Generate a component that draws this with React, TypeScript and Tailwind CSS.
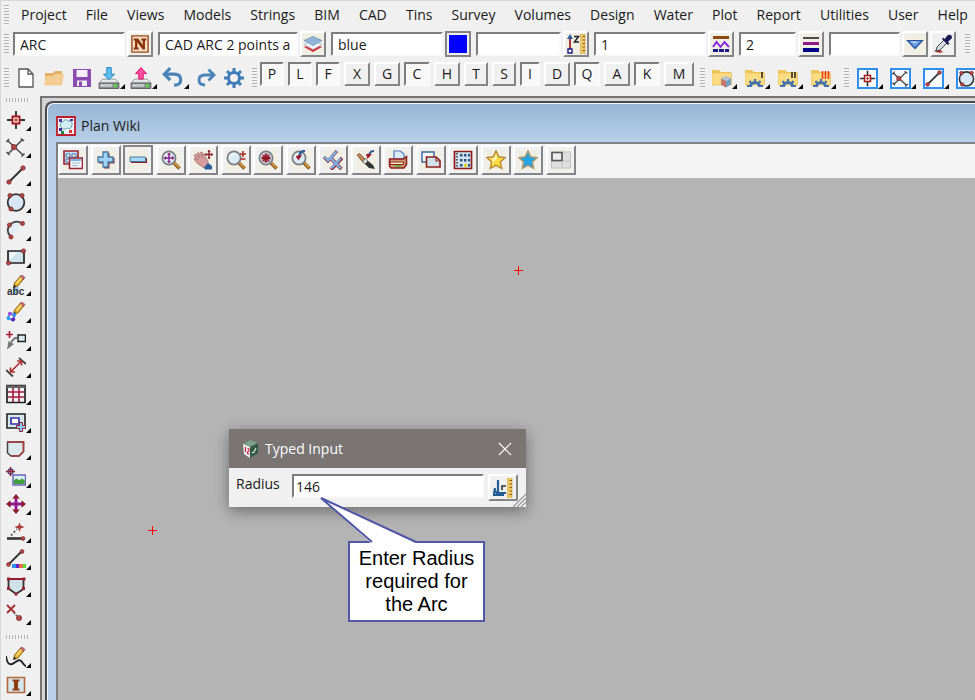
import type { ReactNode } from "react";

const button = "flex shrink-0 items-center justify-center border-2 bg-[#f0f0f0]";
const raised = `${button} border-t-white border-l-white border-r-[#858585] border-b-[#858585]`;
const framed = `${button} border-[#858585]`;
const sunken =
  "border-2 border-t-[#7d7d7d] border-l-[#7d7d7d] border-r-[#fafafa] border-b-[#fafafa]";

function Svg({ children, className = "size-5" }: { children: ReactNode; className?: string }) {
  return (
    <svg viewBox="0 0 20 20" fill="none" className={`shrink-0 ${className}`} aria-hidden="true">
      {children}
    </svg>
  );
}

function Dot({ x, y, r = 1.9 }: { x: number; y: number; r?: number }) {
  return <circle cx={x} cy={y} r={r} fill="#b04a4a" stroke="#7c1d1d" strokeWidth=".7" />;
}

function Corner() {
  return (
    <svg viewBox="0 0 5 5" className="mb-px size-[5px] shrink-0" aria-hidden="true">
      <path d="M5 0V5H0Z" fill="#000" />
    </svg>
  );
}

function Pencil() {
  return (
    <>
      <path d="M7.5 12.5 8.5 8 14.500 1 18 3.500 12 11Z" fill="#e8b02c" stroke="#8a5a10" strokeWidth=".9" />
      <path d="m14 1.800 1.600-2L19 2.500 17.500 4.500Z" fill="#c4676b" stroke="#8a3a3a" strokeWidth=".6" />
      <path d="m7.300 13 .9-3.500 2.300 2Z" fill="#333" />
      <path d="m10.500 8.500 5-6" stroke="#fbe08a" strokeWidth="1.200" />
    </>
  );
}

function Lens({ children }: { children?: ReactNode }) {
  return (
    <>
      <path d="m12.5 12.5 6 6" stroke="#8b5a1d" strokeWidth="3.4" />
      <path d="m13.2 12.6 4.8 4.8" stroke="#e2a84c" strokeWidth="1.4" />
      <circle cx="8" cy="8" r="6.6" fill="#dcecf5" stroke="#777e86" strokeWidth="1.7" />
      <path d="M4 7.5a4.4 4.4 0 0 1 4-3.8" stroke="#fff" strokeWidth="1.2" />
      {children}
    </>
  );
}

function Folder({ children }: { children: ReactNode }) {
  return (
    <Svg>
      <path d="M0 2h7l2 2h10v13H0Z" fill="#efc65a" />
      <path d="M0 5h19.5v12H0Z" fill="#fbdc83" stroke="#e6bd55" strokeWidth=".7" />
      {children}
    </Svg>
  );
}

function HalfGear() {
  return (
    <g stroke="#4472ae">
      <path d="M5.500 19a4.500 4.500 0 0 1 9 0" strokeWidth="3" />
      <path d="M10 14v-3M6.500 15.500 4.500 13M13.500 15.500l2-2.500M5.500 18H2M14.500 18H18" strokeWidth="2.200" />
    </g>
  );
}

function Disk({ color, edge, up }: { color: string; edge: string; up?: boolean }) {
  return (
    <Svg className="size-[22px]">
      <path d="M4 11h12l3 4H1Z" fill="#e4e6e6" stroke="#85898a" strokeWidth=".7" />
      <path d="M1 14.5h18v5H1Z" fill="#8c9091" stroke="#4e5152" strokeWidth=".8" />
      <path d="M2 15.500h11v2.500H2Z" fill="#c8cccc" />
      <circle cx="15.8" cy="17" r="1.5" fill="#50e02c" />
      <path
        d={up ? "M10 .5 15 6h-3v5H8V6H5Z" : "M10 11.500 5 6.5h3V.5h4v6h3Z"}
        fill={color}
        stroke={edge}
        strokeWidth=".9"
      />
    </Svg>
  );
}

const star = "m10 .8 2.7 6 6.5.7-4.8 4.4 1.3 6.6L10 15.3l-5.7 3.2 1.3-6.6L.8 7.5l6.5-.7Z";

const point = (
  <>
    <path d="M10 1v18M1 10h18" stroke="#333" strokeWidth="1.9" />
    <path d="M6.500 6.500h7v7h-7Z" fill="#fff" stroke="#a61c1c" strokeWidth="1.9" />
    <path d="M10 8v4M8 10h4" stroke="#a61c1c" />
  </>
);
const intersect = (
  <>
    <path d="M1.5 3.5 17 18M2 17 16.5 2.5M.5 5l2.5-3M15 1.5 18 4M.5 15 3.5 18M15.5 19.5l3-3" stroke="#444" strokeWidth="1.5" />
    <Dot x={8} y={10} r={2.6} />
  </>
);
const line = (
  <>
    <path d="M3 17 17 3" stroke="#333" strokeWidth="2" />
    <Dot x={3} y={17} r={2.2} />
    <Dot x={17} y={3} r={2.2} />
  </>
);
const circle = (
  <>
    <circle cx="10" cy="10.5" r="8.3" fill="#d7e7f6" stroke="#333" strokeWidth="1.8" />
    <Dot x={4} y={3.5} r={2.1} />
    <Dot x={16} y={3.5} r={2.1} />
    <Dot x={5} y={17} r={2.1} />
  </>
);

const leftTools: [string, ReactNode][] = [
  ["Point", <Svg>{point}</Svg>],
  ["Intersect", <Svg>{intersect}</Svg>],
  ["Line", <Svg>{line}</Svg>],
  ["Circle", <Svg>{circle}</Svg>],
  [
    "Arc",
    <Svg>
      <path d="M16 3Q7 0 3 6T5 17Z" fill="#e2edf8" />
      <path d="M16.5 3.5Q9-1 4 5T5 17" stroke="#444" strokeWidth="1.8" />
      <Dot x={16.5} y={3.5} r={2.1} />
      <Dot x={3.5} y={5} r={2.1} />
      <Dot x={5} y={17} r={2.1} />
    </Svg>,
  ],
  [
    "Rectangle",
    <Svg>
      <path d="M2 4h16v12H2Z" fill="#cfe3ea" stroke="#222" strokeWidth="1.7" />
      <path d="M3 5h9L4 13Z" fill="#eef7fa" />
      <Dot x={2.5} y={16} r={2.1} />
      <Dot x={17.5} y={4} r={2.1} />
    </Svg>,
  ],
  [
    "Text",
    <Svg>
      <path d="M7 12h6v7H7Z" fill="#9fcdf0" />
      <Pencil />
      <text x="1" y="19.500" fontSize="10" fontWeight="bold" fontFamily="Liberation Sans, sans-serif" fill="#333">abc</text>
    </Svg>,
  ],
  [
    "Paint",
    <Svg>
      <Pencil />
      <circle cx="4" cy="12" r="2.2" fill="#9a50d8" />
      <circle cx="8" cy="13" r="2.2" fill="#3f8cf0" />
      <circle cx="2.8" cy="16" r="2.2" fill="#2fa0ea" />
      <circle cx="7" cy="17.3" r="2.2" fill="#5b24b8" />
      <circle cx="5.2" cy="14.7" r="1.5" fill="#fff" />
    </Svg>,
  ],
  [
    "Leader",
    <Svg>
      <path d="M3.5 1v7M0 4.5h7" stroke="#a61c3a" strokeWidth="1.7" />
      <path d="M12 5h7.500v6.500H12Z" fill="#d6e8f0" stroke="#222" strokeWidth="1.5" />
      <path d="M11.500 8H9L5 12" stroke="#777" strokeWidth="1.8" />
      <path d="M1 19.500 2.500 11 8 14Z" fill="#777" />
    </Svg>,
  ],
  [
    "Dimension",
    <Svg>
      <path d="m0 13 7 6.500M13 1l7 6" stroke="#444" strokeWidth="1.8" />
      <path d="M5 14.500 15 4.500M4.500 10.500V15H9M11 4h4.500v4.500" stroke="#b03030" strokeWidth="1.7" />
    </Svg>,
  ],
  [
    "Table",
    <Svg>
      <path d="M1 1.500h18v17H1Z" fill="#eef3f5" stroke="#222" strokeWidth="1.7" />
      <path d="M1 1.500h18V4H1Z" fill="#666" />
      <path d="M7 4v14M13 4v14M2 8h16M2 13h16" stroke="#a61c3a" strokeWidth="1.6" />
    </Svg>,
  ],
  [
    "Viewport",
    <Svg>
      <path d="M1 2h18v14H1Z" fill="#d6e8ef" stroke="#222" strokeWidth="1.6" />
      <path d="M5 6h8v6H5Z" fill="#fff" stroke="#3a32a8" strokeWidth="1.7" />
      <path d="M13.500 10.500h3v3h3v3h-3v3h-3v-3h-3v-3h3Z" fill="#8cc8f4" stroke="#8e2032" />
    </Svg>,
  ],
  [
    "Polygon",
    <Svg>
      <path d="M1.500 3h16v9.500L13 17H5l-3.500-3Z" fill="#dbe9ec" stroke="#444" strokeWidth="1.5" />
      <path d="M1 3h16.500v9.500L13 17H5" stroke="#a83a3a" strokeWidth="1.5" />
    </Svg>,
  ],
  [
    "Image",
    <Svg>
      <path d="M4.500 0v9M0 4.500h9" stroke="#a61c1c" strokeWidth="1.5" />
      <circle cx="4.500" cy="4.500" r="2.500" stroke="#553a78" strokeWidth="1.3" />
      <path d="M7 8h12.500v10H7Z" fill="#d9f0fb" stroke="#6a66b5" strokeWidth="1.5" />
      <path d="M8 17v-4l3-1.500 2 2 3-2 2.800 2V17Z" fill="#3f9c3a" />
    </Svg>,
  ],
  [
    "Move",
    <Svg>
      <path d="M10 3v14M3 10h14" stroke="#8b1a8f" strokeWidth="2.8" />
      <path d="m10 0 3.800 4.500H6.200ZM10 20l3.800-4.500H6.200ZM0 10l4.500-3.800v7.600ZM20 10l-4.500-3.800v7.600Z" fill="#8f1a28" />
    </Svg>,
  ],
  [
    "Angle",
    <Svg>
      <path d="M1 16.500h15" stroke="#333" strokeWidth="2.600" />
      <path d="M5 13.500 11 7" stroke="#444" strokeWidth="1.600" strokeDasharray="2 2" />
      <path d="m13.500.5 1.200 3 3.800 1.500-3.800 1.500-1.200 3.500-1.200-3.500L8.500 5l3.800-1.500Z" fill="#a83a3a" />
      <Dot x={17} y={16.500} />
    </Svg>,
  ],
  [
    "Colour line",
    <Svg>
      <path d="M2.500 15.500 15.500 2.500" stroke="#333" strokeWidth="1.800" />
      <Dot x={2.500} y={15.500} />
      <Dot x={16} y={2.500} />
      <path d="M6 15h4v4H6Z" fill="#2a8cf0" />
      <path d="M10 15h3v4h-3Z" fill="#6a1ec0" />
      <path d="M13 15h4v4h-4Z" fill="#f0684a" />
      <path d="M17 15h3v4h-3Z" fill="#4ee02c" />
    </Svg>,
  ],
  [
    "Shield",
    <Svg>
      <path d="M2.500 3h15v10L10 18l-7.500-5.500Z" fill="#cfe2e8" stroke="#333" strokeWidth="1.800" />
      <path d="M2 3h16" stroke="#8f1a28" strokeWidth="2" />
      <path d="M1 1.500h3v3H1ZM16.500 1.500h3v3h-3ZM1 11h3v3H1ZM16 11h3v3h-3ZM8.500 16.500h3v3h-3Z" fill="#a02030" />
    </Svg>,
  ],
  [
    "Delete",
    <Svg>
      <path d="m1 1 8 8M9 1 1 9" stroke="#a63232" strokeWidth="1.900" />
      <path d="m8 9 4 4" stroke="#555" strokeWidth="1.300" strokeDasharray="1.500 1" />
      <Dot x={13} y={14} r={2.600} />
    </Svg>,
  ],
];

const bottomTools: [string, ReactNode][] = [
  [
    "Sketch",
    <Svg>
      <path d="M0 9c1 8 4 10 8 7s6-4 8-1 3 4 4 4" stroke="#222" strokeWidth="1.900" />
      <Pencil />
    </Svg>,
  ],
  [
    "Insert",
    <Svg>
      <path d="M1.500 2.500h17v15h-17Z" fill="#d3e6ec" stroke="#b5653a" strokeWidth="1.600" />
      <path d="M6.500 4.500h7v2H12v7h1.500v2h-7v-2H8v-7H6.500Z" fill="#8e3a12" />
    </Svg>,
  ],
];

const viewTools: [string, ReactNode][] = [
  [
    "Windows",
    <Svg>
      <path d="M1 1h14v13H1Z" fill="#c6def2" stroke="#9c2432" strokeWidth="1.600" />
      <path d="M3 4h4v3H3ZM9 4h4v3H9ZM3 9h4v3H3Z" fill="#fff" stroke="#4270a8" />
      <path d="M6.500 8h13v10.500h-13Z" fill="#eef6fb" stroke="#9c2432" strokeWidth="1.600" />
      <path d="M7.500 10h11" stroke="#7ab0dc" strokeWidth="2" />
      <path d="M9 13h8M9 15.500h6" stroke="#9db8ca" />
    </Svg>,
  ],
  ["Add", <Svg><path d="M8 3h5.500v5h5v5.500h-5v5H8v-5H3V8h5Z" fill="#8c3038" /><path d="M7 2h5v5h5v5h-5v5H7v-5H2V7h5Z" fill="#9dd3f4" stroke="#4778a0" strokeWidth="1.300" /></Svg>],
  ["Remove", <Svg><path d="M3 8h16v5H3Z" fill="#8e1e2c" /><path d="M2 7h15.500v4.500H2Z" fill="#a5dbf8" stroke="#4778a0" /></Svg>],
  [
    "Fit",
    <Svg>
      <Lens>
        <path d="M8 4v8M4 8h8" stroke="#8a1f9a" strokeWidth="1.500" />
        <path d="m8 2.500 2 2.500H6ZM8 13.500 10 11H6ZM2.500 8 5 6v4ZM13.500 8 11 6v4Z" fill="#8a1f6a" />
      </Lens>
    </Svg>,
  ],
  [
    "Pan",
    <Svg>
      <path d="M1 5.500 2.500 4 7 7.500 4 3.500 5.500 2.500 10 7 7.500 2.500 9 2l6 9v4l-4 3-7-5-3-4 1-1.500 3 2.500Z" fill="#d69c9c" stroke="#9a6464" strokeWidth=".7" />
      <path d="m11 17.500 4-4.500 4 3v3.500h-7Z" fill="#2c5c9a" />
      <path d="M16 0v9M11.500 4.500h8.500" stroke="#8e1e2c" strokeWidth="1.400" />
      <path d="m16 0 1.500 2h-3ZM16 9l1.500-2h-3ZM20 4.500 18 3v3ZM11.500 4.500l2-1.500v3Z" fill="#8e1e2c" />
    </Svg>,
  ],
  ["Zoom", <Svg><Lens /><path d="M17 1v6M14 4h6M14.500 9h5" stroke="#a62a2a" strokeWidth="1.500" /></Svg>],
  [
    "Shrink",
    <Svg>
      <Lens>
        <path d="m4.500 4.500 7 7M11.500 4.500l-7 7" stroke="#a01828" strokeWidth="1.200" />
        <path d="M7.200 3.500v3.700H3.500M8.800 3.500v3.700h3.700M7.200 12.500V8.800H3.500M8.800 12.500V8.800h3.700" stroke="#8e1424" strokeWidth="1.400" />
      </Lens>
    </Svg>,
  ],
  [
    "Previous zoom",
    <Svg>
      <Lens>
        <path d="M14 .5Q9 1 8 7" stroke="#2e5c94" strokeWidth="2.400" />
        <path d="M4.500 6 11 5 7.500 10.500Z" fill="#a01828" />
      </Lens>
    </Svg>,
  ],
  [
    "Toggle",
    <Svg>
      <path d="m1 7 4 4L14 1" stroke="#8e2432" strokeWidth="3.200" />
      <path d="m7.500 8 11 11M19 8 8 19.500" stroke="#8e2432" strokeWidth="3.600" />
      <path d="m1 6.500 4 4L14 1M8 8.500l10 10M18 8.500l-10 10" stroke="#7db2e4" strokeWidth="2.400" />
    </Svg>,
  ],
  [
    "Redraw",
    <Svg>
      <path d="m1 5 2.500-1.500 6 6-2.500 3Z" fill="#bc8558" stroke="#6c4424" strokeWidth=".7" />
      <path d="m6.500 11.500 3-3 2.500 2.500-3 3Z" fill="#d8d8d8" stroke="#555" strokeWidth=".7" />
      <path d="M9 14 12 11l5 4 2 4-6-1Z" fill="#333" />
      <path d="M18 1q-4 0-5 4" stroke="#2e5c94" strokeWidth="2" />
      <path d="M10 4h6l-4.500 5Z" fill="#a01828" />
    </Svg>,
  ],
  [
    "Print",
    <Svg>
      <path d="M6 9V1h6l4 3v5Z" fill="#dcebfa" stroke="#4a78c0" strokeWidth="1.200" />
      <path d="M1.500 9h14l3-2.500v8L16 18H3l-1.500-2Z" fill="#cf9a74" stroke="#8e1e1e" strokeWidth="1.500" />
      <path d="M2 12h13.500v2.500H2Z" fill="#fff1c8" stroke="#8e1e1e" />
      <path d="M7 16h6" stroke="#3cbf30" strokeWidth="1.400" />
    </Svg>,
  ],
  [
    "Copy view",
    <Svg>
      <path d="M1 2h12v10H1Z" fill="#f4f8fa" stroke="#3c6c9c" strokeWidth="1.500" />
      <path d="M5.500 7H15l4 3.500V17H5.500Z" fill="#cfe4e8" stroke="#8e1e1e" strokeWidth="1.600" />
      <path d="M15 7v4h4" stroke="#8e1e1e" strokeWidth="1.200" />
    </Svg>,
  ],
  [
    "Grid",
    <Svg>
      <path d="M1.500 1.500h17v17h-17Z" fill="#d2e4ee" stroke="#8e1e1e" strokeWidth="1.700" />
      <path d="M4 3v14" stroke="#333" strokeWidth="1.500" strokeDasharray="1.500 1.500" />
      <path d="M7 4h2.500v2.500H7ZM11 4h2.500v2.500H11ZM15 4h2v2.500h-2ZM7 9h2.500v2.500H7ZM11 9h2.500v2.500H11ZM15 9h2v2.500h-2ZM7 14h2.500v2.500H7ZM15 14h2v2.500h-2Z" fill="#2c5084" />
      <path d="M11 14h3v3h-3Z" fill="#e8d020" />
    </Svg>,
  ],
  ["Favourites", <Svg><path d={star} fill="#fbdc3c" stroke="#b78a3c" strokeWidth="1.400" /><path d="m10 4 1.300 4-5.300 6 1-4.500L4 8.500l4-.5Z" fill="#fff4b0" /></Svg>],
  ["User favourites", <Svg><path d={star} fill="#22a3e6" stroke="#b19a6c" strokeWidth="1.400" /></Svg>],
  [
    "Layout",
    <Svg>
      <path d="M.5 2h19v16H.5Z" fill="#dedede" stroke="#c2c2c2" />
      <path d="M11 2v16M1 11h18" stroke="#c2c2c2" />
      <path d="M1 2.500h10v8H1Z" fill="#ececec" stroke="#555" strokeWidth="1.600" />
    </Svg>,
  ],
];

const rulerIcon = (
  <>
    <path d="M14.500 0H19v20h-4.500Z" fill="#f0ca68" stroke="#cfa03c" strokeWidth=".6" />
    <path d="M16.500 2.500H19M16.500 6H19M16.500 9.500H19M16.500 13H19M16.500 16.500H19" stroke="#8a5a10" />
  </>
);

const fields: { label: string; value: string; width: string; icon: ReactNode }[] = [
  {
    label: "Name",
    value: "ARC",
    width: "w-[112px]",
    icon: (
      <Svg className="size-[18px]">
        <path d="M1 1h18v18H1Z" fill="#f5dcc4" stroke="#9a4a1c" strokeWidth="1.500" />
        <path d="M3 4h5l5 7V6h-1.500V4H17v2h-1.500v10H13L7 8v6h1.500v2H3v-2h1.500V6H3Z" fill="#8e3208" />
      </Svg>
    ),
  },
  {
    label: "Model",
    value: "CAD ARC 2 points and radius",
    width: "w-[140px]",
    icon: (
      <Svg>
        <path d="m1 13 9-4 9 4-9 5Z" fill="#d8303c" />
        <path d="m1 10.500 9-4 9 4-9 5Z" fill="#eef5fa" stroke="#9ab4c8" strokeWidth=".7" />
        <path d="m1 6.500 9-4 9 4-9 5Z" fill="#8fb4d6" stroke="#6a8eb0" strokeWidth=".7" />
      </Svg>
    ),
  },
  { label: "Colour", value: "blue", width: "w-[112px]", icon: <span className="size-[18px] shrink-0 bg-[#0000ff]" /> },
  {
    label: "Height",
    value: "",
    width: "w-[85px]",
    icon: (
      <Svg>
        {rulerIcon}
        <path d="M4 4v12" stroke="#a02828" strokeWidth="1.800" />
        <path d="m4 0 3 5H1Z" fill="#2a5c9c" />
        <path d="M2 15h4v4H2Z" fill="#fff" stroke="#1c1c8c" strokeWidth="1.400" />
        <path d="M8 2.500h4.500L8.500 8H13" stroke="#222" strokeWidth="1.500" />
      </Svg>
    ),
  },
  {
    label: "Style",
    value: "1",
    width: "w-[112px]",
    icon: (
      <Svg>
        <path d="M2 3.500h16" stroke="#8e4a10" strokeWidth="3" />
        <path d="m2 13 3.500-5 4 5 4-5L18 13" stroke="#8a2be2" strokeWidth="2" />
        <path d="M2 16.500h16" stroke="#1a1a8c" strokeWidth="2.800" strokeDasharray="5 1" />
      </Svg>
    ),
  },
  {
    label: "Weight",
    value: "2",
    width: "w-[57px]",
    icon: (
      <Svg>
        <path d="M2 4h16" stroke="#222" strokeWidth="1.600" />
        <path d="M2 9.500h16" stroke="#8e1a8e" strokeWidth="3" />
        <path d="M2 16h16" stroke="#00008b" strokeWidth="4" />
      </Svg>
    ),
  },
  {
    label: "Tinability",
    value: "",
    width: "w-[71px]",
    icon: (
      <Svg>
        <path d="M2.500 6.500h15L10 14.500Z" fill="#6c9ce4" stroke="#27539c" strokeWidth="1.200" />
        <path d="M5 7.500h8l-3 2Z" fill="#c3dcfa" />
      </Svg>
    ),
  },
];

const snaps: [string, string, boolean][] = [
  ["P", "w-6", true],
  ["L", "w-6", true],
  ["F", "w-6", true],
  ["X", "w-[26px]", false],
  ["G", "w-[26px]", false],
  ["C", "w-[26px]", true],
  ["H", "w-[26px]", false],
  ["T", "w-6", false],
  ["S", "w-6", false],
  ["I", "w-5", true],
  ["D", "w-[26px]", false],
  ["Q", "w-[26px]", true],
  ["A", "w-[26px]", false],
  ["K", "w-[26px]", true],
  ["M", "w-[30px]", false],
];

const fileTools: [string, ReactNode][] = [
  ["New", <Svg><path d="M3 1h9l5 5v13H3Z" fill="#fff" stroke="#555" strokeWidth="1.300" /><path d="M12 1v5h5" stroke="#555" strokeWidth="1.300" /></Svg>],
  ["Open", <Svg><path d="M1 17V5h8l2-2h7v14Z" fill="#e3b068" /><path d="M0 17.500 2 8h7l2-2h9l-2 11.500Z" fill="#f3cd93" /></Svg>],
  [
    "Save",
    <Svg>
      <path d="M1 1h18v18H1Z" fill="#8a4bb0" />
      <path d="M4.500 2h11v7h-11ZM5 12.500h10V18H5Z" fill="#f3eef7" />
      <path d="M7 13.500h3V18H7Z" fill="#8a4bb0" />
    </Svg>,
  ],
];

const transferTools: [string, ReactNode][] = [
  ["Import", <Disk color="#5fc0f0" edge="#1f86c4" />],
  ["Export", <Disk color="#ff4fa0" edge="#e0106c" up />],
  [
    "Undo",
    <Svg className="size-[22px]">
      <path d="M3 6.500h8q6 0 6 5T11 16.500" stroke="#4a83b8" strokeWidth="2.800" />
      <path d="M7.500 1 2 6.500 7.500 12" stroke="#4a83b8" strokeWidth="2.800" />
    </Svg>,
  ],
];

const historyTools: [string, ReactNode][] = [
  [
    "Redo",
    <Svg>
      <path d="M17 7H9q-6 0-6 5T9 17" stroke="#4a83b8" strokeWidth="2.800" />
      <path d="m12.500 1.500 5.500 5.500-5.500 5.500" stroke="#4a83b8" strokeWidth="2.800" />
    </Svg>,
  ],
  [
    "Settings",
    <Svg>
      <circle cx="10" cy="10" r="5.500" stroke="#3f7cb8" strokeWidth="3" />
      <path d="M10 0v4M10 16v4M0 10h4M16 10h4M3 3l2.700 2.700M14.300 14.300 17 17M17 3l-2.700 2.700M5.700 14.300 3 17" stroke="#3f7cb8" strokeWidth="3" />
    </Svg>,
  ],
];

const chainTools: [string, ReactNode][] = [
  [
    "Project folder",
    <Folder>
      <path d="m14 8 5 2.500v6L14 19.500l-5-3v-6Z" fill="#6fa0c0" />
      <path d="m9 10.500 5 2.500v6.500l-5-3Z" fill="#c8776a" />
      <path d="m14 8 5 2.500-5 2.500-5-2.500Z" fill="#b8c4cc" />
    </Folder>,
  ],
  ["Chain 1", <Folder><HalfGear /><path d="M17 4v6" stroke="#222" strokeWidth="1.500" /></Folder>],
  ["Chain 2", <Folder><HalfGear /><path d="M14 4v6M17 4v6" stroke="#222" strokeWidth="1.500" /></Folder>],
  ["Chain 3", <Folder><HalfGear /><path d="M11.500 3v8M14.500 3v8M17.500 3v8" stroke="#f03a1c" strokeWidth="1.600" /></Folder>],
];

const cadTools: [string, ReactNode][] = [
  ["CAD point", point],
  ["CAD intersect", intersect],
  ["CAD line", line],
  ["CAD circle", circle],
];

const menus = [
  "Project", "File", "Views", "Models", "Strings", "BIM", "CAD", "Tins", "Survey", "Volumes",
  "Design", "Water", "Plot", "Report", "Utilities", "User", "Help",
];

function Grip() {
  return (
    <span className="h-5 w-[5px] shrink-0 bg-[repeating-linear-gradient(to_bottom,#b0b0b0_0_1px,#f4f4f4_1px_3px)]" />
  );
}

function WideGrip() {
  return (
    <span className="ml-[5px] h-1 w-6 shrink-0 bg-[repeating-linear-gradient(to_right,#b0b0b0_0_1px,#f4f4f4_1px_3px)]" />
  );
}

function FlatTool({ name, icon }: { name: string; icon: ReactNode }) {
  return (
    <button type="button" aria-label={name} className="flex h-6 w-7 shrink-0 items-center justify-center">
      {icon}
    </button>
  );
}

function MenuTool({ name, icon }: { name: string; icon: ReactNode }) {
  return (
    <button type="button" aria-label={name} className="flex h-6 w-8 shrink-0 items-end pl-[2px]">
      <span className="flex h-6 items-center">{icon}</span>
      <Corner />
    </button>
  );
}

function SideTool({ name, icon }: { name: string; icon: ReactNode }) {
  return (
    <button type="button" aria-label={name} className="flex h-6 w-8 shrink-0 items-end pl-[5px]">
      <span className="flex h-6 items-center">{icon}</span>
      <Corner />
    </button>
  );
}

function Marker({ className }: { className: string }) {
  return (
    <svg viewBox="0 0 9 9" className={`absolute size-[9px] ${className}`} aria-hidden="true">
      <path d="M4 0h1v4h4v1H5v4H4V5H0V4h4Z" fill="#ff0000" />
    </svg>
  );
}

function TypedInput() {
  return (
    <div className="absolute left-[171px] top-[251px] w-[297px] bg-[#f0f0f0] shadow-[0_4px_14px_rgba(0,0,0,0.4)]">
      <div className="flex h-[39px] items-center bg-[#7a7473] pl-3 pr-[14px] text-white">
        <Svg>
          <path d="m9 1 8 3-8 4-7-3Z" fill="#7da08c" />
          <path d="m2 5 7 3v11l-6-4Z" fill="#f2eeee" />
          <path d="m9 8 8-4v10l-8 5Z" fill="#345a48" />
          <path d="m11 14 2-1 2-4" stroke="#dce8e0" strokeWidth="1.200" />
          <path d="M4.500 8v5M6.500 9.500l1.500.5v2l-1.500 1v1.500l1.800.5" stroke="#c8203c" strokeWidth="1.100" />
        </Svg>
        <h2 className="ml-1 text-sm">Typed Input</h2>
        <button type="button" aria-label="Close" className="ml-auto">
          <svg viewBox="0 0 14 14" className="size-[14px]" fill="none" aria-hidden="true">
            <path d="m1 1 12 12M13 1 1 13" stroke="#fff" strokeWidth="1.200" />
          </svg>
        </button>
      </div>
      <div className="flex h-[39px] items-start pl-[7px] pt-[6px]">
        <label htmlFor="radius" className="w-[56px] text-sm leading-5">Radius</label>
        <input id="radius" defaultValue="146" className={`h-6 w-[192px] bg-white px-[2px] text-sm ${sunken}`} />
        <button type="button" aria-label="Measure" className={`ml-1 h-[27px] w-[30px] ${raised}`}>
          <Svg>
            {rulerIcon}
            <path d="M5 2v13h8M0 17h11M2 10l-1 6M1 12l5 5" stroke="#1f5c94" strokeWidth="2.200" />
            <path d="M9 12V8h4" stroke="#333" strokeWidth="1.600" />
          </Svg>
        </button>
      </div>
      <svg viewBox="0 0 14 14" className="absolute bottom-0 right-0 size-[14px]" fill="none" aria-hidden="true">
        <path d="M1 14 14 1M5 14l9-9M9 14l5-5" stroke="#fff" strokeWidth="3" />
        <path d="M1 14 14 1M5 14l9-9M9 14l5-5" stroke="#999" strokeWidth="1.500" />
      </svg>
    </div>
  );
}

export default function App() {
  return (
    <div className="flex h-screen flex-col overflow-hidden border-l border-t border-[#d6d6d6] bg-[#f0f0f0] font-['Open_Sans','Noto_Sans',sans-serif] text-[#1a1a1a]">
      <header className="shrink-0">
        <nav className="flex h-7 items-center gap-3 pl-[3px] pr-[7px] text-sm">
          <Grip />
          <div className="flex grow justify-between">
            {menus.map((m) => (
              <button key={m} type="button">{m}</button>
            ))}
          </div>
        </nav>

        <div className="flex h-[30px] items-center overflow-hidden pl-[3px]">
          <Grip />
          <div className="ml-1 flex shrink-0 gap-[5px]">
            {fields.map((f) => (
              <div key={f.label} className="flex shrink-0 items-center gap-[2px]">
                <input
                  aria-label={f.label}
                  defaultValue={f.value}
                  className={`h-6 bg-white px-[5px] text-sm ${f.width} ${sunken}`}
                />
                <button
                  type="button"
                  aria-label={`Choose ${f.label}`}
                  className={`size-[26px] ${f.label === "Colour" ? framed : raised}`}
                >
                  <span className="flex size-5 shrink-0 items-center justify-center bg-[#f1eee2]">{f.icon}</span>
                </button>
              </div>
            ))}
          </div>
          <button type="button" aria-label="Pick" className={`ml-[2px] size-[26px] ${raised}`}>
            <Svg>
              <path d="M1 17q5-3 9 1-4 2-9-1Z" fill="#b02a2a" />
              <path d="m3 17 1-4 8-8 3 3-8 8Z" fill="#d4e0e6" stroke="#444" />
              <path d="m9 5 6 6 1.500-1.500L15 8l4-4q0-4-4-3l-3.500 4L10.500 3.500Z" fill="#1c1c54" />
            </Svg>
          </button>
          <span className="w-[9px] shrink-0" />
          <Grip />
        </div>

        <div className="flex h-[35px] items-start overflow-hidden pl-[3px] pt-[3px]">
          <div className="flex h-8 shrink-0 items-center">
            <Grip />
            <div className="ml-[3px] flex">
              {fileTools.map(([n, i]) => <FlatTool key={n} name={n} icon={i} />)}
              {transferTools.map(([n, i]) => <MenuTool key={n} name={n} icon={i} />)}
              {historyTools.map(([n, i]) => <FlatTool key={n} name={n} icon={i} />)}
            </div>
            <span className="w-1 shrink-0" />
            <Grip />
          </div>
          <div className="ml-[3px] flex shrink-0 gap-1">
            {snaps.map(([letter, width, on]) => (
              <button
                key={letter}
                type="button"
                aria-pressed={on}
                className={`h-6 text-sm leading-5 ${width} ${on ? `bg-[#f8f8f8] ${sunken}` : raised}`}
              >
                {letter}
              </button>
            ))}
          </div>
          <div className="ml-[6px] flex h-8 shrink-0 items-center">
            <Grip />
            <div className="ml-[5px] flex gap-px">
              {chainTools.map(([n, i]) => <MenuTool key={n} name={n} icon={i} />)}
            </div>
            <span className="w-[3px] shrink-0" />
            <Grip />
            <div className="ml-[6px] flex gap-px">
              {cadTools.map(([n, i]) => (
                <MenuTool
                  key={n}
                  name={n}
                  icon={
                    <span className="flex size-[21px] items-center justify-center border-2 border-[#2f8ff0] bg-[#f6fafd]">
                      <Svg className="size-[17px]">{i}</Svg>
                    </span>
                  }
                />
              ))}
            </div>
          </div>
        </div>
      </header>

      <div className="flex min-h-0 grow">
        <aside className="flex w-9 shrink-0 flex-col pt-[4px]">
          <WideGrip />
          <div className="mt-[6px] flex h-[518px] shrink-0 flex-col justify-between">
            {leftTools.map(([n, i]) => <SideTool key={n} name={n} icon={i} />)}
          </div>
          <span className="h-[9px] shrink-0" />
          <WideGrip />
          <div className="mt-[6px] flex shrink-0 flex-col gap-1">
            {bottomTools.map(([n, i]) => <SideTool key={n} name={n} icon={i} />)}
          </div>
        </aside>

        <main className="ml-[3px] mt-[2px] flex min-w-0 grow border-l-2 border-t-2 border-[#747474] bg-[#d4d4d4] pl-[3px] pt-[3px]">
          <section className="flex min-w-0 grow flex-col rounded-tl-lg border-l-2 border-t-2 border-[#4a4a4a] bg-linear-to-b from-[#97b4d3] to-[#b9d1ea] to-[40px] pl-[9px] shadow-[inset_1px_1px_0_#eef5fb]">
            <div className="flex h-[39px] shrink-0 items-center gap-[5px] pt-[7px]">
              <Svg>
                <path d="M1 1h18v18H1Z" fill="#eaf6f8" stroke="#c01c2c" strokeWidth="1.800" />
                <path d="M5 11q-2-4 2-5 2-4 5-1 5 0 4 4-1 5-5 3-4 3-6-1Z" fill="#d4f0f4" stroke="#68a4ac" />
                <path d="M3 3h3v3H3ZM14 3h3v2h-3ZM3 12h3v3H3Z" fill="#4a2aa0" />
                <path d="M5 15h3v3H5Z" fill="#1d8a38" />
                <path d="M13 14h3v3h-3Z" fill="#e83030" />
              </Svg>
              <h1 className="text-sm">Plan Wiki</h1>
            </div>
            <div className="flex min-h-0 grow flex-col border-l-2 border-t-2 border-[#808080]">
              <div className="h-[34px] shrink-0 bg-[#f4f4f4] pt-px">
                <div className="flex w-[518px] justify-between">
                  {viewTools.map(([n, i]) => (
                    <button
                      key={n}
                      type="button"
                      aria-label={n}
                      className={`size-[30px] ${n === "Remove" ? framed : raised}`}
                    >
                      <span className="bg-[#f1eee2]">{i}</span>
                    </button>
                  ))}
                </div>
              </div>
              <div className="relative grow overflow-hidden bg-[#b4b4b4]">
                <Marker className="left-[456px] top-[88px]" />
                <Marker className="left-[90px] top-[348px]" />
                <TypedInput />
                <p className="absolute left-[290px] top-[363px] w-[137px] border-2 border-[#4f57a6] bg-white px-2 py-1 text-center font-['Liberation_Sans',Arial,sans-serif] text-[20px] leading-[23px] text-black">
                  Enter Radius required for the Arc
                </p>
                <svg viewBox="0 0 100 50" className="absolute left-[262px] top-[318px] h-[50px] w-[100px]" fill="none" aria-hidden="true">
                  <path d="M52 48 1 2l95 45Z" fill="#fff" />
                  <path d="M52 46 1 2l95 44" stroke="#4f57a6" strokeWidth="2" />
                </svg>
              </div>
            </div>
          </section>
        </main>
      </div>
    </div>
  );
}
